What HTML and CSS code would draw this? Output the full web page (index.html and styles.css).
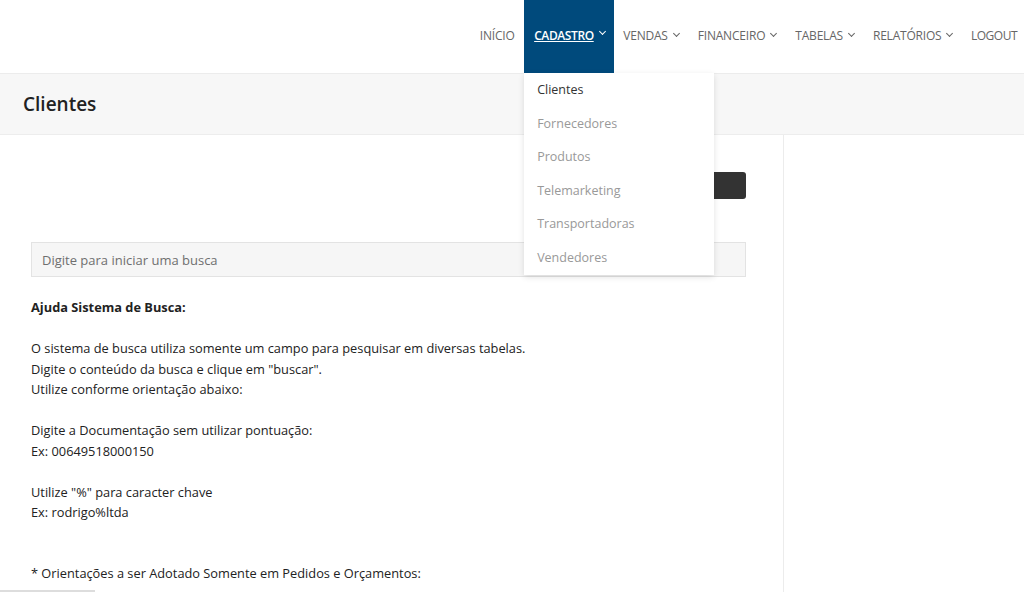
FILE: index.html
```html
<!DOCTYPE html>
<html lang="pt-BR">
  <head>
    <meta charset="UTF-8" />
    <meta name="viewport" content="width=device-width, initial-scale=1.0" />
    <title>Clientes</title>
    <link rel="stylesheet" href="styles.css">
  </head>
  <body>
    <header class="topbar">
      <ul class="menu">
        <li><a href="#">Início</a></li>
        <li class="menu-drop active">
          <a href="#"><u>Cadastro</u><span class="caret"></span></a>
          <div class="drop-content">
            <a href="#" class="current">Clientes</a>
            <a href="#">Fornecedores</a>
            <a href="#">Produtos</a>
            <a href="#">Telemarketing</a>
            <a href="#">Transportadoras</a>
            <a href="#">Vendedores</a>
          </div>
        </li>
        <li><a href="#">Vendas<span class="caret"></span></a></li>
        <li><a href="#">Financeiro<span class="caret"></span></a></li>
        <li><a href="#">Tabelas<span class="caret"></span></a></li>
        <li><a href="#">Relatórios<span class="caret"></span></a></li>
        <li class="last"><a href="#">Logout</a></li>
      </ul>
    </header>

    <div class="page-title">
      <h1>Clientes</h1>
    </div>

    <div class="main">
      <div class="content">
        <div class="actions">
          <button class="btn-dark">Novo Cliente</button>
        </div>

        <input class="search" type="text" placeholder="Digite para iniciar uma busca" />

        <div class="help">
          <p><b>Ajuda Sistema de Busca:</b></p>
          <p>
            O sistema de busca utiliza somente um campo para pesquisar em diversas tabelas.<br>
            Digite o conteúdo da busca e clique em "buscar".<br>
            Utilize conforme orientação abaixo:
          </p>
          <p>
            Digite a Documentação sem utilizar pontuação:<br>
            Ex: 00649518000150
          </p>
          <p>
            Utilize "%" para caracter chave<br>
            Ex: rodrigo%ltda
          </p>
          <p class="gap">* Orientações a ser Adotado Somente em Pedidos e Orçamentos:</p>
        </div>
      </div>
      <div class="side"></div>
    </div>
    <div class="scroll-thumb"></div>
  </body>
</html>
```

FILE: styles.css
```css
body {
  margin: 0;
  background-color: white;
  color: #222;
  font-family: "Open Sans", Arial, sans-serif;
  font-size: 12.8px;
  overflow: hidden;
}

.topbar {
  height: 73px;
  border-bottom: 1px solid #ececec;
  display: flex;
  justify-content: flex-end;
  position: relative;
  z-index: 2;
}

.menu {
  list-style: none;
  margin: 0;
  padding: 0;
  display: flex;
}

.menu li {
  position: relative;
}

.menu > li > a {
  display: flex;
  align-items: center;
  box-sizing: border-box;
  height: 72px;
  padding: 0 9.5px 2px;
  color: #666;
  text-decoration: none;
  text-transform: uppercase;
  font-size: 12px;
  letter-spacing: -0.2px;
}

.menu > li.last > a {
  padding: 0 7px 2px 9px;
  letter-spacing: -0.5px;
}

.menu > li.active > a {
  height: 73px;
  margin-bottom: -1px;
  background-color: #004a7c;
  color: white;
  font-weight: 600;
  padding: 0 9px 3px 10px;
  letter-spacing: -0.4px;
}

.caret {
  display: inline-block;
  width: 4px;
  height: 4px;
  border-right: 1px solid currentColor;
  border-bottom: 1px solid currentColor;
  transform: rotate(45deg);
  margin: -4px 0 0 6px;
}

.active .caret {
  margin-top: -8px;
  border-width: 0 0.8px 0.8px 0;
}

.drop-content {
  position: absolute;
  top: 73px;
  left: 0;
  width: 190px;
  background-color: white;
  box-shadow: 0 2px 6px rgba(0, 0, 0, 0.12);
}

.drop-content a {
  display: block;
  padding: 0 13px;
  line-height: 33.6px;
  color: #999;
  text-decoration: none;
  font-size: 12.5px;
}

.drop-content a.current {
  color: #333;
}

.page-title {
  background-color: #f7f7f7;
  border-bottom: 1px solid #ededed;
  height: 60px;
  display: flex;
  align-items: center;
  padding-left: 23px;
}

.page-title h1 {
  margin: 0;
  font-size: 19px;
  font-weight: 600;
  color: #222;
}

.main {
  display: grid;
  grid-template-columns: 784px 1fr;
}

.content {
  border-right: 1px solid #ececec;
  padding: 37px 37px 0 31px;
  min-height: 460px;
}

.actions {
  display: flex;
  justify-content: flex-end;
}

.btn-dark {
  background-color: #333;
  color: white;
  border: none;
  border-radius: 3px;
  height: 27px;
  width: 150px;
  font-family: inherit;
}

.search {
  display: block;
  box-sizing: border-box;
  width: 100%;
  height: 35px;
  margin-top: 43px;
  padding: 0 10px;
  background-color: #f6f6f6;
  border: 1px solid #e3e3e3;
  font-family: inherit;
  font-size: 13px;
}

.search::placeholder {
  color: #6f6f6f;
}

.help {
  margin-top: 20px;
  line-height: 20.5px;
  color: #222;
}

.help p {
  margin: 0 0 20.5px;
}

.help p.gap {
  margin-top: 40px;
}

.scroll-thumb {
  position: fixed;
  left: 0;
  bottom: 0;
  width: 95px;
  height: 2px;
  background-color: #ddd;
}
```
